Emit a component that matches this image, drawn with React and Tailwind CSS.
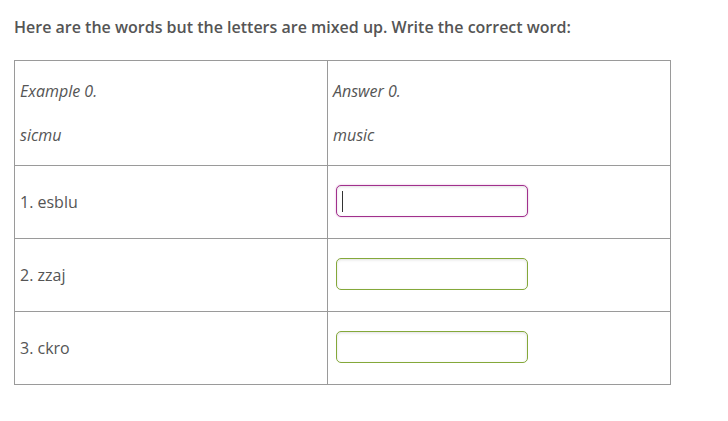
export default function App() {
  const rows = [
    { q: "1. esblu", focus: true },
    { q: "2. zzaj" },
    { q: "3. ckro" },
  ];
  return (
    <div className="w-[728px] h-[421px] bg-white px-[14px] pt-[15px] text-[#555]" style={{ fontFamily: '"Open Sans", sans-serif' }}>
      <h1 className="text-[16px] leading-[24px] font-semibold text-[#555]">
        Here are the words but the letters are mixed up. Write the correct word:
      </h1>
      <div className="mt-[21px] w-[657px] border border-[#9a9a9a]">
        <div className="grid grid-cols-[313px_342px] h-[104px]">
          <div className="border-r border-[#9a9a9a] pl-[5px] pt-[19px] text-[16px] leading-[22px] italic">
            <div>Example 0.</div>
            <div className="mt-[22px]">sicmu</div>
          </div>
          <div className="pl-[5px] pt-[19px] text-[16px] leading-[22px] italic">
            <div>Answer 0.</div>
            <div className="mt-[22px]">music</div>
          </div>
        </div>
        {rows.map((r, i) => (
          <div key={i} className="grid grid-cols-[313px_342px] h-[73px] border-t border-[#9a9a9a]">
            <div className="border-r border-[#9a9a9a] pl-[5px] flex items-center text-[16px] leading-[22px]">
              {r.q}
            </div>
            <div className="pl-[8px] pt-[19px]">
              {r.focus ? (
                <div className="relative w-[192px] h-[32px] rounded-[5px] border border-[#a0308c] shadow-[inset_0_1px_3px_rgba(0,0,0,0.12),0_0_2px_rgba(200,60,170,0.45)] bg-white">
                  <div className="absolute left-[5px] top-[5px] w-px h-[21px] bg-[#333]" />
                </div>
              ) : (
                <div className="w-[192px] h-[32px] rounded-[5px] border border-[#84a83a] shadow-[inset_0_1px_3px_rgba(0,0,0,0.12)] bg-white" />
              )}
            </div>
          </div>
        ))}
      </div>
    </div>
  );
}
